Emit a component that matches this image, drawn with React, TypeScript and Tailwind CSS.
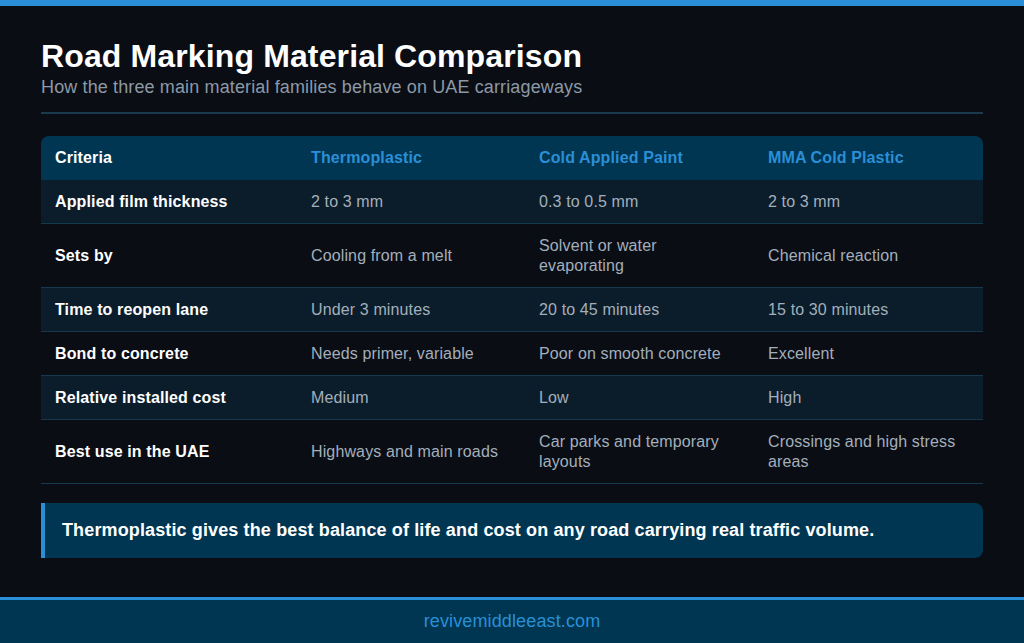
import React from "react";

const rows: { c: string; t: string; p: string; m: string }[] = [
  { c: "Applied film thickness", t: "2 to 3 mm", p: "0.3 to 0.5 mm", m: "2 to 3 mm" },
  { c: "Sets by", t: "Cooling from a melt", p: "Solvent or water evaporating", m: "Chemical reaction" },
  { c: "Time to reopen lane", t: "Under 3 minutes", p: "20 to 45 minutes", m: "15 to 30 minutes" },
  { c: "Bond to concrete", t: "Needs primer, variable", p: "Poor on smooth concrete", m: "Excellent" },
  { c: "Relative installed cost", t: "Medium", p: "Low", m: "High" },
  { c: "Best use in the UAE", t: "Highways and main roads", p: "Car parks and temporary layouts", m: "Crossings and high stress areas" },
];

export default function App() {
  return (
    <div
      className="flex h-[643px] w-full flex-col overflow-hidden bg-[#0a0d14] tracking-[0.008em]"
      style={{ fontFamily: '"Liberation Sans", Arial, sans-serif' }}
    >
      <div className="h-[6px] w-full bg-[#2a8fd6]" />
      <main className="flex flex-1 flex-col px-[41px] pt-[31px]">
        <h1 className="text-[32px] font-bold leading-[38px] text-white">
          Road Marking Material Comparison
        </h1>
        <p className="text-[18px] leading-6 text-[#8c99a6]">
          How the three main material families behave on UAE carriageways
        </p>
        <div className="mt-[13px] h-[2px] w-full bg-[#1b3a4d]" />

        <div className="mt-[22px] w-full">
          <div className="grid grid-cols-[256px_228px_229px_229px] rounded-t-lg bg-[#003652] text-[16px] font-bold leading-5">
            <div className="px-[14px] py-3 text-white">Criteria</div>
            <div className="px-[14px] py-3 text-[#2a8fd6]">Thermoplastic</div>
            <div className="px-[14px] py-3 text-[#2a8fd6]">Cold Applied Paint</div>
            <div className="px-[14px] py-3 text-[#2a8fd6]">MMA Cold Plastic</div>
          </div>
          {rows.map((r, i) => (
            <div
              key={r.c}
              className={
                i % 2 === 0
                  ? "grid grid-cols-[256px_228px_229px_229px] items-center border-b border-[#16384c] bg-[#0b1d2a] text-[16px] leading-5"
                  : "grid grid-cols-[256px_228px_229px_229px] items-center border-b border-[#16384c] bg-[#0a0d14] text-[16px] leading-5"
              }
            >
              <div className="px-[14px] py-[11.5px] font-bold text-white">{r.c}</div>
              <div className="px-[14px] py-[11.5px] text-[#a3afbb]">{r.t}</div>
              <div className="px-[14px] py-[11.5px] text-[#a3afbb]">{r.p}</div>
              <div className="px-[14px] py-[11.5px] text-[#a3afbb]">{r.m}</div>
            </div>
          ))}
        </div>

        <div className="mt-[19px] rounded-r-lg border-l-4 border-[#2a8fd6] bg-[#003652] py-[15px] pl-[17px] pr-4">
          <p className="text-[18px] font-bold leading-[25px] text-white">
            Thermoplastic gives the best balance of life and cost on any road carrying real traffic volume.
          </p>
        </div>
      </main>
      <footer className="border-t-[3px] border-[#2a8fd6] bg-[#003652] py-[9px] text-center">
        <span className="text-[18px] leading-[25px] text-[#2a8fd6]">revivemiddleeast.com</span>
      </footer>
    </div>
  );
}
